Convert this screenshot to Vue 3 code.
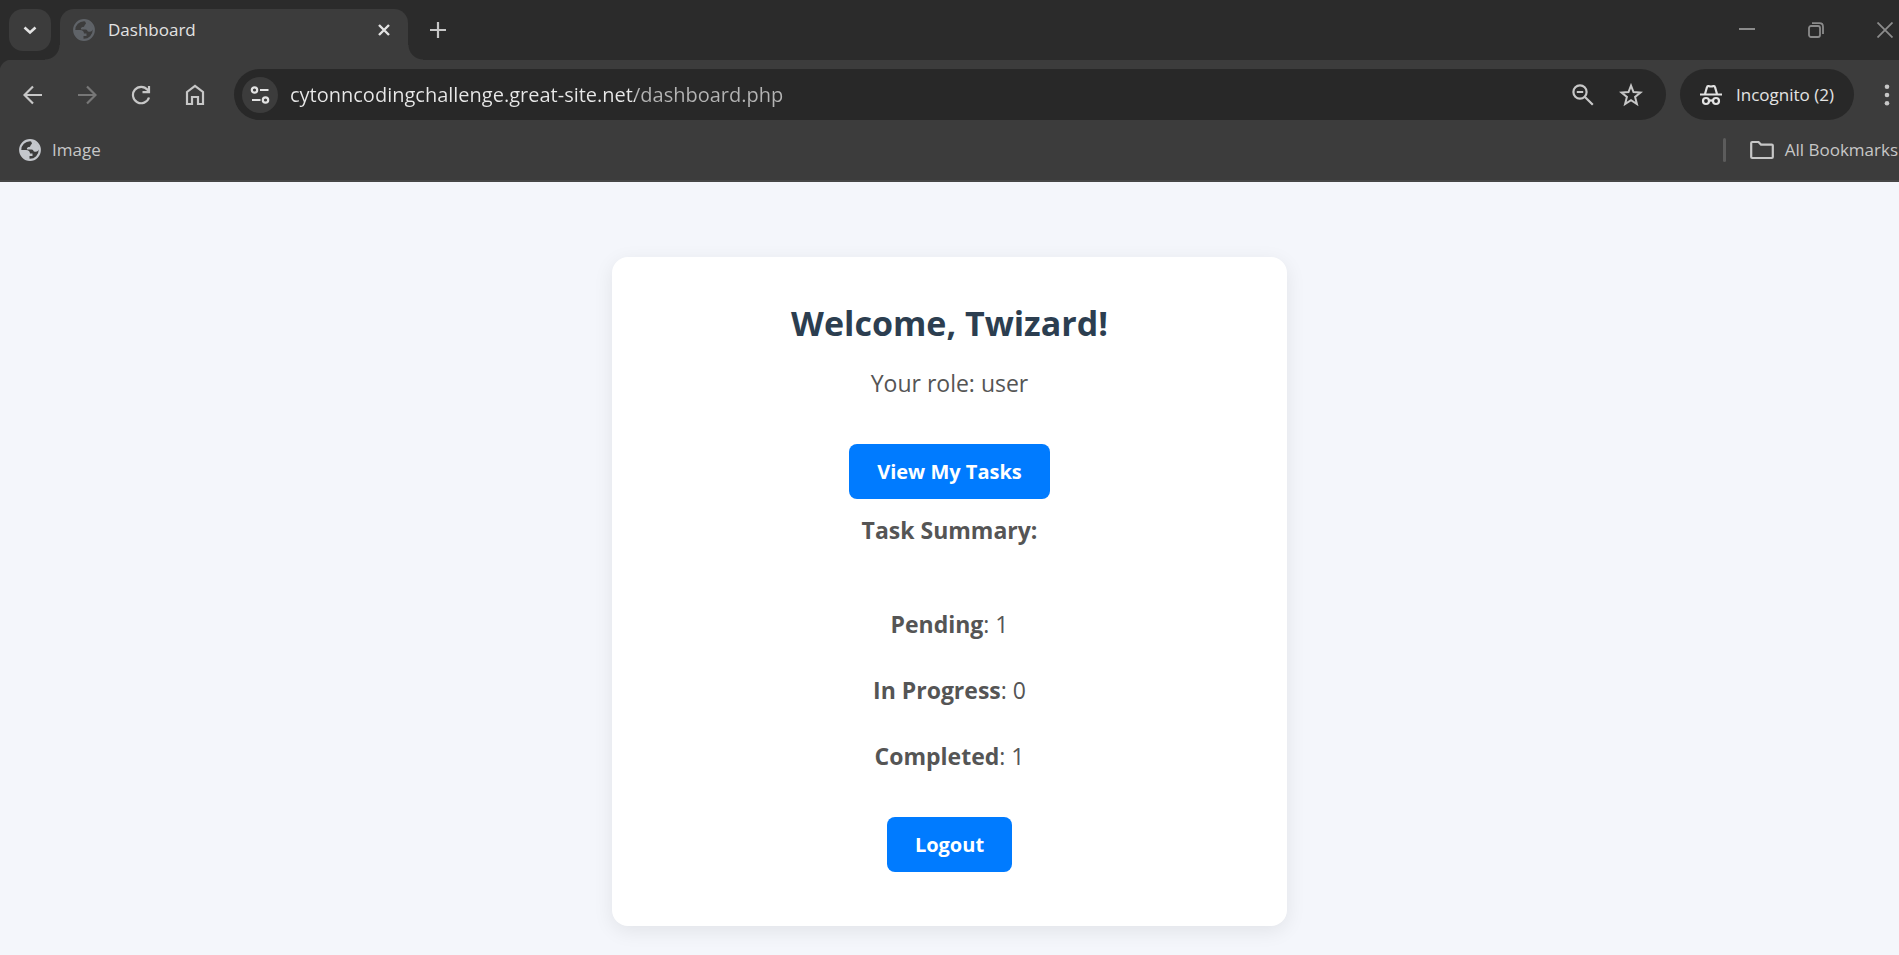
<script setup>
import { ref } from 'vue'

const address = ref('cytonncodingchallenge.great-site.net/dashboard.php')

const summary = [
  { label: 'Pending', count: 1 },
  { label: 'In Progress', count: 0 },
  { label: 'Completed', count: 1 },
]
</script>

<template>
  <div class="window">
    <header class="chrome">
      <div class="tab-strip">
        <button class="tab-search" aria-label="Search tabs">
          <svg width="14" height="14" viewBox="0 0 14 14"><path d="M1.500 4.500 7 9.500 12.500 4.500" fill="none" stroke="currentColor" stroke-width="2.600" /></svg>
        </button>
        <div class="tab">
          <svg class="tab-icon" width="22" height="22" viewBox="0 0 22 22"><use href="#globe" /></svg>
          <span class="tab-title">Dashboard</span>
          <button class="plain tab-close" aria-label="Close tab">
            <svg width="12" height="12" viewBox="0 0 12 12"><path d="M1 1 11 11M11 1 1 11" stroke="currentColor" stroke-width="2.400" /></svg>
          </button>
        </div>
        <button class="plain new-tab" aria-label="New tab">
          <svg width="16" height="16" viewBox="0 0 16 16"><path d="M8 0V16M0 8H16" stroke="currentColor" stroke-width="2.200" /></svg>
        </button>
        <div class="window-controls">
          <button class="plain" aria-label="Minimize">
            <svg width="16" height="16" viewBox="0 0 16 16"><path d="M0 7H16" stroke="currentColor" stroke-width="2" /></svg>
          </button>
          <button class="plain" aria-label="Restore">
            <svg width="16" height="16" viewBox="0 0 16 16"><g fill="none" stroke="currentColor" stroke-width="1.800"><rect x="1" y="4" width="11" height="11" rx="2" /><path d="M4 1.200H11.500Q15 1.200 15 4.700V12" /></g></svg>
          </button>
          <button class="plain" aria-label="Close window">
            <svg width="16" height="16" viewBox="0 0 16 16"><path d="M.500.500 15.500 15.500M15.500.500.500 15.500" stroke="currentColor" stroke-width="1.800" /></svg>
          </button>
        </div>
      </div>

      <div class="toolbar">
        <nav class="nav">
          <button class="plain" aria-label="Back">
            <svg width="20" height="20" viewBox="0 0 20 20"><path d="M19 10H2M10 1.500 1.500 10 10 18.500" fill="none" stroke="currentColor" stroke-width="2.200" /></svg>
          </button>
          <button class="plain dim" aria-label="Forward">
            <svg width="20" height="20" viewBox="0 0 20 20"><path d="M1 10H18M10 1.500 18.500 10 10 18.500" fill="none" stroke="currentColor" stroke-width="2.200" /></svg>
          </button>
          <button class="plain" aria-label="Reload">
            <svg width="20" height="20" viewBox="0 0 20 20"><path d="M18 12.500A8.200 8.200 0 1 1 16.500 4.800L18 6.500M18 1V7.200H11.500" fill="none" stroke="currentColor" stroke-width="2.200" /></svg>
          </button>
          <button class="plain" aria-label="Home">
            <svg width="20" height="22" viewBox="0 0 20 22"><path d="M2 8 10 1.800 18 8V20H13V13H7V20H2Z" fill="none" stroke="currentColor" stroke-width="2.200" /></svg>
          </button>
        </nav>

        <div class="omnibox">
          <button class="site-info" aria-label="Site information">
            <svg width="20" height="20" viewBox="0 0 20 20"><g fill="none" stroke="currentColor" stroke-width="2.200"><circle cx="4.500" cy="5" r="2.700" /><path d="M10 5H18.500M2 15H10.500" /><circle cx="15.500" cy="15" r="2.700" /></g></svg>
          </button>
          <input v-model="address" class="address" type="text" aria-label="Address" spellcheck="false" />
          <button class="plain" aria-label="Zoom">
            <svg width="22" height="22" viewBox="0 0 22 22"><g fill="none" stroke="currentColor" stroke-width="2.200"><circle cx="8" cy="8" r="6.600" /><path d="M4.800 8H11.200M12.700 12.700 20.800 20.800" /></g></svg>
          </button>
          <button class="plain" aria-label="Bookmark this tab">
            <svg width="24" height="24" viewBox="0 0 24 24"><path d="M12 2.600 14.500 9 21.500 9.500 16.100 13.900 17.900 21 12 17.100 6.100 21 7.900 13.900 2.500 9.500 9.500 9Z" fill="none" stroke="currentColor" stroke-width="2" /></svg>
          </button>
        </div>

        <button class="incognito">
          <svg width="22" height="22" viewBox="0 0 22 22"><g fill="none" stroke="currentColor" stroke-width="2.200"><path d="M0 10.500H22M5 10 7 3Q7.300 1.800 8.500 2.100 11 2.900 13.500 2.100 14.700 1.800 15 3L17 10" /><circle cx="6" cy="17" r="3" /><circle cx="16" cy="17" r="3" /><path d="M9 17Q11 15.700 13 17" /></g></svg>
          <span>Incognito (2)</span>
        </button>
        <button class="plain menu" aria-label="Menu">
          <svg width="6" height="22" viewBox="0 0 6 22"><g fill="currentColor"><circle cx="3" cy="2.800" r="2.300" /><circle cx="3" cy="11" r="2.300" /><circle cx="3" cy="19.200" r="2.300" /></g></svg>
        </button>
      </div>

      <div class="bookmarks">
        <a class="bookmark" href="#">
          <svg class="bookmark-globe" width="22" height="22" viewBox="0 0 22 22">
            <g id="globe">
              <circle cx="11" cy="11" r="9.800" fill="none" stroke="currentColor" stroke-width="2.200" />
              <path d="M12 1.500C15 3 18 3.500 20.500 9 20 12 17.500 13.500 15 12.500 14 12 14.500 10.500 12.500 10.500H9C7 10.500 8 8 10 8 12 8 11 5.500 13 5Z" fill="currentColor" />
              <path d="M1.500 11H7C9.500 11 11 12.500 11 14.500H13.500V17H10.500V20.500C5 20 1.500 16 1.500 11Z" fill="currentColor" />
            </g>
          </svg>
          <span>Image</span>
        </a>
        <span class="divider"></span>
        <a class="bookmark" href="#">
          <svg width="24" height="20" viewBox="0 0 24 20"><path d="M1.200 3Q1.200 2 2.200 2H8.500L11 4.600H21.800Q22.800 4.600 22.800 5.600V17Q22.800 18 21.800 18H2.200Q1.200 18 1.200 17Z" fill="none" stroke="currentColor" stroke-width="2.200" /></svg>
          <span>All Bookmarks</span>
        </a>
      </div>
    </header>

    <main class="page">
      <section class="card">
        <h1>Welcome, Twizard!</h1>
        <p class="role">Your role: user</p>
        <a class="action" href="#">View My Tasks</a>
        <p class="summary-title"><strong>Task Summary:</strong></p>
        <ul class="summary">
          <li v-for="item in summary" :key="item.label"><strong>{{ item.label }}</strong>: {{ item.count }}</li>
        </ul>
        <a class="action" href="#">Logout</a>
      </section>
    </main>
  </div>
</template>

<style>
body {
  margin: 0;
  background: #f4f6fb;
}
</style>

<style scoped>
.window {
  display: flex;
  flex-direction: column;
  min-height: 100vh;
  font-family: 'Open Sans', 'Noto Sans', sans-serif;
  overflow: hidden;
}

button {
  font-family: inherit;
  border: 0;
  padding: 0;
  cursor: pointer;
}

svg {
  display: block;
  flex: none;
}

.plain {
  display: flex;
  background: none;
  color: inherit;
}

.chrome {
  background: #3c3c3c;
  color: #c7c7c7;
  border-bottom: 2px solid #464646;
}

.tab-strip {
  display: flex;
  align-items: center;
  height: 60px;
  background: #2b2b2b;
  color: #e3e3e3;
}

.tab-search {
  display: grid;
  place-items: center;
  width: 42px;
  height: 42px;
  margin: 0 9px;
  border-radius: 14px;
  background: #3c3c3c;
  color: #e3e3e3;
}

.tab {
  position: relative;
  display: flex;
  align-items: center;
  align-self: flex-end;
  box-sizing: border-box;
  width: 348px;
  height: 51px;
  padding: 0 18px 9px 13px;
  border-radius: 14px 14px 0 0;
  background: #3c3c3c;
}

.tab::before,
.tab::after {
  content: '';
  position: absolute;
  bottom: 0;
  width: 15px;
  height: 15px;
}

.tab::before {
  right: 100%;
  background: radial-gradient(circle at 0 0, transparent 14px, #3c3c3c 15px);
}

.tab::after {
  left: 100%;
  background: radial-gradient(circle at 100% 0, transparent 14px, #3c3c3c 15px);
}

.tab-icon {
  color: #5f6368;
}

.tab-title {
  flex: 1;
  margin-left: 13px;
  font-size: 17px;
  line-height: 26px;
}

.new-tab {
  margin-left: 22px;
  color: #c7c7c7;
}

.window-controls {
  display: flex;
  gap: 53px;
  margin-left: auto;
  margin-right: 6px;
  color: #8b8b8b;
}

.toolbar {
  display: flex;
  align-items: center;
  height: 69px;
  background: radial-gradient(circle at 12px 12px, #3c3c3c 12px, #2b2b2b 13px) 0 0 / 12px 12px no-repeat;
}

.nav {
  display: flex;
  align-items: center;
  gap: 34px;
  margin: 0 29px 0 23px;
}

.dim {
  color: #777777;
}

.omnibox {
  display: flex;
  flex: 1;
  align-items: center;
  gap: 25px;
  box-sizing: border-box;
  height: 51px;
  padding: 0 23px 0 8px;
  border-radius: 26px;
  background: #282828;
}

.site-info {
  display: grid;
  place-items: center;
  width: 36px;
  height: 36px;
  margin-right: -13px;
  border-radius: 50%;
  background: #3c3c3c;
  color: #e3e3e3;
}

.address {
  flex: 1;
  min-width: 0;
  height: 32px;
  padding: 0;
  border: 0;
  outline: 0;
  font-family: inherit;
  font-size: 20px;
  color: transparent;
  caret-color: #e8e8e8;
  background: linear-gradient(to right, #e8e8e8 345px, #b4b4b4 345px);
  background-clip: text;
}

.incognito {
  display: flex;
  align-items: center;
  gap: 14px;
  height: 51px;
  margin-left: 14px;
  padding: 0 20px;
  border-radius: 26px;
  background: #282828;
  color: #e3e3e3;
  font-size: 17px;
  white-space: nowrap;
}

.menu {
  margin: 0 9px 0 30px;
}

.bookmarks {
  display: flex;
  align-items: center;
  height: 41px;
  padding: 0 1px 10px 19px;
}

.bookmark {
  display: flex;
  align-items: center;
  gap: 11px;
  color: inherit;
  font-size: 17px;
  line-height: 24px;
  text-decoration: none;
  white-space: nowrap;
}

.bookmark-globe {
  color: #c4c7cc;
}

.divider {
  width: 3px;
  height: 24px;
  margin: 0 24px 0 auto;
  border-radius: 2px;
  background: #5c5c5c;
}

.page {
  display: flex;
  flex: 1;
  align-items: flex-start;
  justify-content: center;
  padding: 75px 24px 28px;
  background: #f4f6fb;
}

.card {
  display: flex;
  flex-direction: column;
  align-items: center;
  box-sizing: border-box;
  width: 100%;
  max-width: 675px;
  padding: 41px 54px 54px;
  border-radius: 16px;
  background: #ffffff;
  box-shadow: 0 5px 20px rgba(0, 0, 0, 0.08);
  color: #555555;
  font-size: 23px;
  line-height: 34px;
  text-align: center;
}

h1 {
  margin: 0;
  color: #2c3e50;
  font-size: 34px;
  line-height: 50px;
}

p {
  margin: 0;
}

.role {
  margin: 18px 0 44px;
}

.action {
  padding: 11px 28px;
  border-radius: 8px;
  background: #007bff;
  color: #ffffff;
  font-size: 20px;
  line-height: 33px;
  font-weight: 700;
  text-decoration: none;
}

.summary-title {
  margin: 14px 0 60px;
}

.summary {
  display: flex;
  flex-direction: column;
  gap: 32px;
  margin: 0 0 44px;
  padding: 0;
  list-style: none;
}
</style>
